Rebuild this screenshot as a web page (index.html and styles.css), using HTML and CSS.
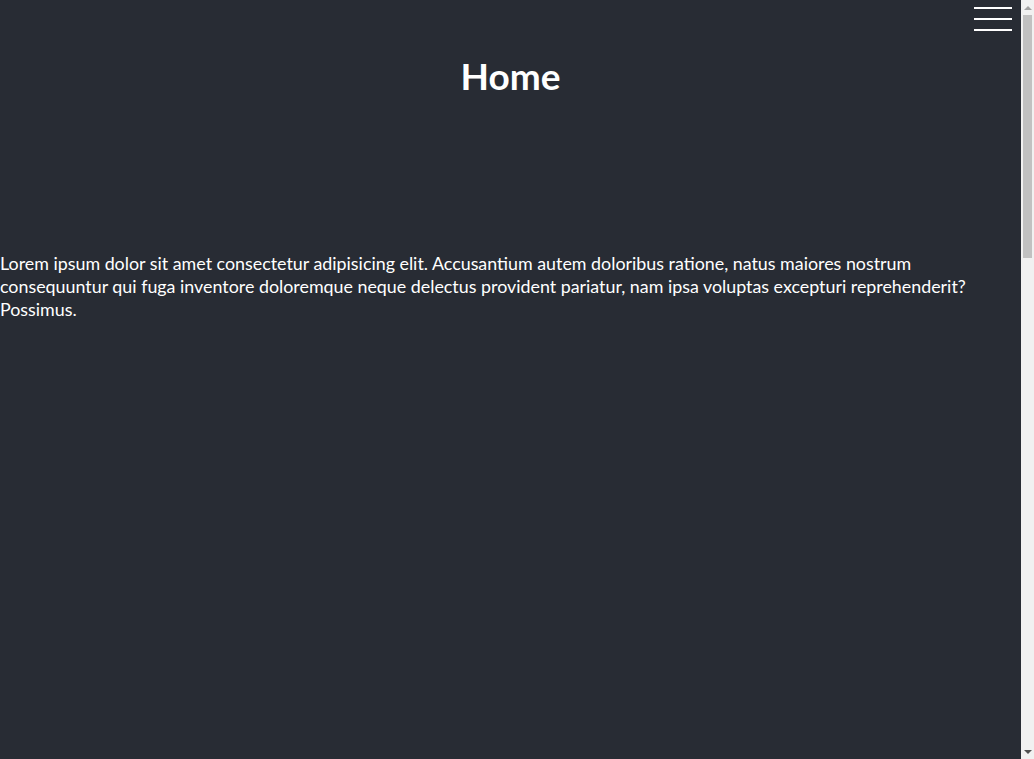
FILE: index.html
```html
<!DOCTYPE html>
<html lang="en">
<head>
<meta charset="utf-8">
<title>Home</title>
<link rel="stylesheet" href="styles.css">
</head>
<body>
<button class="menu-toggle" aria-label="Open menu">
  <span class="bar"></span>
  <span class="bar"></span>
  <span class="bar"></span>
</button>
<main class="content">
  <section class="section" id="home">
    <h1 class="section-title">Home</h1>
    <p class="section-text">Lorem ipsum dolor sit amet consectetur adipisicing elit. Accusantium autem doloribus ratione, natus maiores nostrum consequuntur qui fuga inventore doloremque neque delectus provident pariatur, nam ipsa voluptas excepturi reprehenderit? Possimus.</p>
  </section>
  <section class="section" id="about"></section>
  <section class="section" id="contact"></section>
</main>
<div class="scrollbar" aria-hidden="true">
  <span class="sb-btn sb-up"></span>
  <span class="sb-track"><span class="sb-thumb"></span></span>
  <span class="sb-btn sb-down"></span>
</div>
</body>
</html>
```
FILE: styles.css
```css
html, body {
  margin: 0;
  padding: 0;
}
body {
  background: #282c34;
  color: #ffffff;
  font-family: "Lato", "Open Sans", sans-serif;
}
.content {
  padding-right: 13px;
}
.section {
  height: 759px;
  box-sizing: border-box;
}
#home {
  padding-top: 53px;
}
.section-title {
  margin: 0;
  text-align: center;
  font-size: 37px;
  font-weight: 700;
  line-height: 46px;
}
.section-text {
  margin: 153px 0 0;
  font-size: 17.85px;
  line-height: 23px;
}
.menu-toggle {
  position: fixed;
  top: 7px;
  right: 22px;
  width: 38px;
  padding: 0;
  border: 0;
  background: transparent;
  display: flex;
  flex-direction: column;
  gap: 9px;
  cursor: pointer;
}
.bar {
  display: block;
  height: 2px;
  width: 100%;
  background: #ffffff;
}
.scrollbar {
  position: fixed;
  top: 0;
  right: 0;
  bottom: 0;
  width: 13px;
  background: #f1f1f1;
  display: flex;
  flex-direction: column;
}
.sb-btn {
  height: 15px;
  flex: none;
  display: flex;
  justify-content: center;
  align-items: center;
}
.sb-btn::before {
  content: "";
  width: 0;
  height: 0;
  border-left: 4px solid transparent;
  border-right: 4px solid transparent;
}
.sb-up::before {
  border-bottom: 4px solid #a3a3a3;
}
.sb-down::before {
  border-top: 4px solid #505050;
}
.sb-track {
  flex: 1;
  padding: 0 2px;
}
.sb-thumb {
  display: block;
  height: 243px;
  background: #c1c1c1;
}
```
